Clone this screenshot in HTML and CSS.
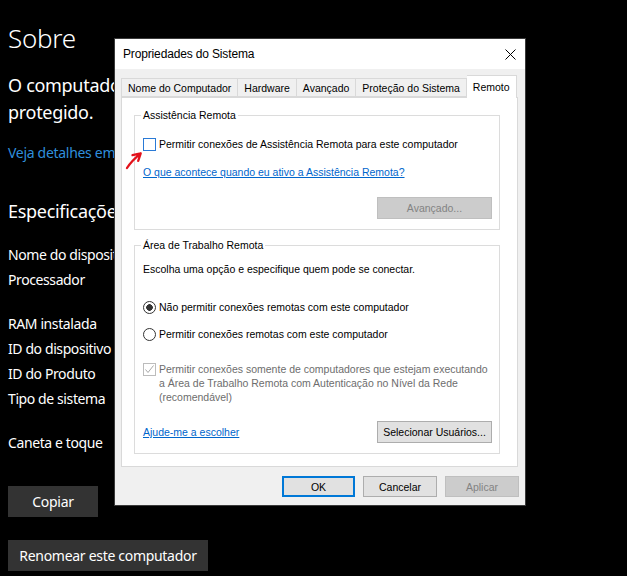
FILE: index.html
```html
<!DOCTYPE html>
<html>
<head>
	<meta charset="UTF-8">
	<title>Sobre</title>
	<link rel="stylesheet" href="styles.css">
</head>
<body>
	<div class="settings">
		<h1 class="page-title">Sobre</h1>
		<p class="status">O computador está sendo monitorado e<br>protegido.</p>
		<a class="details-link">Veja detalhes em Segurança do Windows</a>
		<h2 class="section-title">Especificações do dispositivo</h2>
		<ul class="specs">
			<li>Nome do dispositivo</li>
			<li class="tall">Processador</li>
			<li>RAM instalada</li>
			<li>ID do dispositivo</li>
			<li>ID do Produto</li>
			<li class="tall">Tipo de sistema</li>
			<li>Caneta e toque</li>
		</ul>
		<button class="dark-btn copy">Copiar</button>
		<button class="dark-btn rename">Renomear este computador</button>
	</div>

	<div class="dialog">
		<div class="titlebar">
			<span class="title">Propriedades do Sistema</span>
			<svg class="close" width="11" height="11" viewBox="0 0 11 11"><path d="M0.5 0.5L10.5 10.5M10.5 0.5L0.5 10.5" stroke="#000" stroke-width="1"/></svg>
		</div>
		<div class="dialog-body">
			<ul class="tabs">
				<li>Nome do Computador</li>
				<li>Hardware</li>
				<li>Avançado</li>
				<li>Proteção do Sistema</li>
				<li class="active">Remoto</li>
			</ul>
			<div class="tab-panel">
				<fieldset class="group first">
					<legend>Assistência Remota</legend>
					<div class="check-row"><span class="box focus"></span>Permitir conexões de Assistência Remota para este computador</div>
					<a class="link help-link">O que acontece quando eu ativo a Assistência Remota?</a>
					<div class="group-actions"><button class="win-btn" disabled>Avançado...</button></div>
				</fieldset>
				<fieldset class="group second">
					<legend>Área de Trabalho Remota</legend>
					<p class="hint">Escolha uma opção e especifique quem pode se conectar.</p>
					<div class="check-row radio-one"><span class="radio checked"></span>Não permitir conexões remotas com este computador</div>
					<div class="check-row radio-two"><span class="radio"></span>Permitir conexões remotas com este computador</div>
					<div class="check-row multi disabled">
						<span class="box">
							<svg width="11" height="11" viewBox="0 0 11 11"><path d="M1.5 5.5L4 8.5L9.5 1.5" fill="none" stroke="#a8a8a8" stroke-width="1"/></svg>
						</span>
						<span>Permitir conexões somente de computadores que estejam executando<br>a Área de Trabalho Remota com Autenticação no Nível da Rede<br>(recomendável)</span>
					</div>
					<div class="group-actions split">
						<a class="link">Ajude-me a escolher</a>
						<button class="win-btn">Selecionar Usuários...</button>
					</div>
				</fieldset>
			</div>
			<div class="dialog-buttons">
				<button class="win-btn default">OK</button>
				<button class="win-btn">Cancelar</button>
				<button class="win-btn" disabled>Aplicar</button>
			</div>
		</div>
		<!-- marca vermelha desenhada sobre a captura -->
		<svg class="annotation" width="22" height="22" viewBox="0 0 22 22">
			<path d="M5 18C8 13 13 8 18.7 3.3M10.5 5.2L18.7 3.3L16.2 10.8" fill="none" stroke="#e3121b" stroke-width="2.3" stroke-linecap="round" stroke-linejoin="round"/>
		</svg>
	</div>
</body>
</html>
```

FILE: styles.css
```css
*{margin: 0;padding: 0;box-sizing: border-box;}
li{list-style-type: none;}
body{width: 627px;height: 576px;overflow: hidden;position: relative;background: #000;color: #fff;font-family: "Noto Sans", "Open Sans", sans-serif;}

/* pagina de configuracoes ao fundo */
.settings{padding: 20px 8px 0 8px;}
.page-title{font-size: 26px;font-weight: 300;line-height: 36px;letter-spacing: -0.3px;}
.status{margin-top: 16px;font-size: 18px;line-height: 27px;letter-spacing: -0.3px;white-space: nowrap;}
.details-link{display: block;margin-top: 17px;font-size: 14px;line-height: 20px;color: #2f8fdc;letter-spacing: -0.3px;white-space: nowrap;}
.section-title{margin-top: 35px;font-size: 18px;font-weight: normal;line-height: 27px;letter-spacing: -0.3px;white-space: nowrap;}
.specs{margin-top: 17px;}
.specs li{height: 25px;line-height: 25px;font-size: 14px;letter-spacing: -0.4px;white-space: nowrap;}
.specs li.tall{height: 44px;}
.dark-btn{display: block;height: 31px;border: none;background: #333;color: #fff;font-family: inherit;font-size: 14px;letter-spacing: -0.3px;padding: 0 10px;white-space: nowrap;}
.dark-btn.copy{width: 90px;margin-top: 31px;}
.dark-btn.rename{width: 200px;margin-top: 23px;}

/* janela Propriedades do Sistema */
.dialog{position: absolute;left: 114px;top: 38px;width: 412px;height: 468px;border: 1px solid #3a3a3a;background: #f0f0f0;color: #000;font-family: "Liberation Sans", Arial, sans-serif;font-size: 10.5px;}
.titlebar{height: 30px;background: #fff;display: flex;align-items: center;justify-content: space-between;padding: 0 9px 0 8px;}
.titlebar .title{font-size: 12px;letter-spacing: -0.15px;}
.titlebar .close{display: block;}
.dialog-body{padding: 9px 6px 7px 6px;}
.tabs{display: flex;height: 19px;position: relative;z-index: 1;}
.tabs li{height: 19px;line-height: 18px;padding: 0 6px;border: 1px solid #d9d9d9;border-right: none;background: #f0f0f0;white-space: nowrap;}
.tabs li:nth-of-type(4){border-right: 1px solid #d9d9d9;}
.tabs li.active{height: 23px;margin-top: -3px;padding: 0 6px;line-height: 22px;background: #fff;border: 1px solid #d9d9d9;border-left: none;border-bottom: none;}
.tab-panel{background: #fff;border: 1px solid #d9d9d9;padding: 10px 17px 12px 12px;margin-right: 1px;}

.group{border: 1px solid #dcdcdc;padding: 0 7px 10px 8px;min-width: 0;}
.group legend{padding: 0 2px;margin-left: -2px;line-height: 14px;}
.group.second{margin-top: 8px;}
.check-row{display: flex;align-items: center;height: 16px;white-space: nowrap;}
.first .check-row{margin-top: 14px;}
.box{width: 13px;height: 13px;border: 1px solid #333;background: #fff;margin-right: 3px;flex-shrink: 0;display: flex;align-items: center;justify-content: center;}
.box.focus{border-color: #2a7ad6;}
.radio{width: 13px;height: 13px;border: 1px solid #333;border-radius: 50%;background: #fff;margin-right: 3px;flex-shrink: 0;}
.radio.checked{background: radial-gradient(circle, #333 0, #333 3px, #fff 3.6px);}
.link{display: block;color: #0066cc;text-decoration: underline;line-height: 16px;white-space: nowrap;}
.help-link{margin-top: 12px;}
.group-actions{display: flex;justify-content: flex-end;margin-top: 17px;}
.group-actions.split{justify-content: space-between;align-items: center;margin-top: 17px;}
.hint{margin-top: 9px;line-height: 16px;}
.radio-one{margin-top: 22px;}
.radio-two{margin-top: 11px;}
.check-row.multi{height: auto;align-items: flex-start;margin-top: 20px;line-height: 14px;color: #6d6d6d;}
.check-row.multi .box{border-color: #bcbcbc;margin-top: 1px;}

.win-btn{height: 22px;width: 115px;border: 1px solid #adadad;background: #e1e1e1;color: #000;font-family: inherit;font-size: 10.5px;}
.win-btn:disabled{background: #cccccc;border-color: #bfbfbf;color: #838383;}
.dialog-buttons{display: flex;justify-content: flex-end;gap: 8px;margin-top: 9px;}
.dialog-buttons .win-btn{width: 74px;height: 21px;}
.dialog-buttons .win-btn.default{width: 73px;border: 2px solid #0078d7;}
.annotation{position: absolute;left: 7px;top: 111px;}
```
